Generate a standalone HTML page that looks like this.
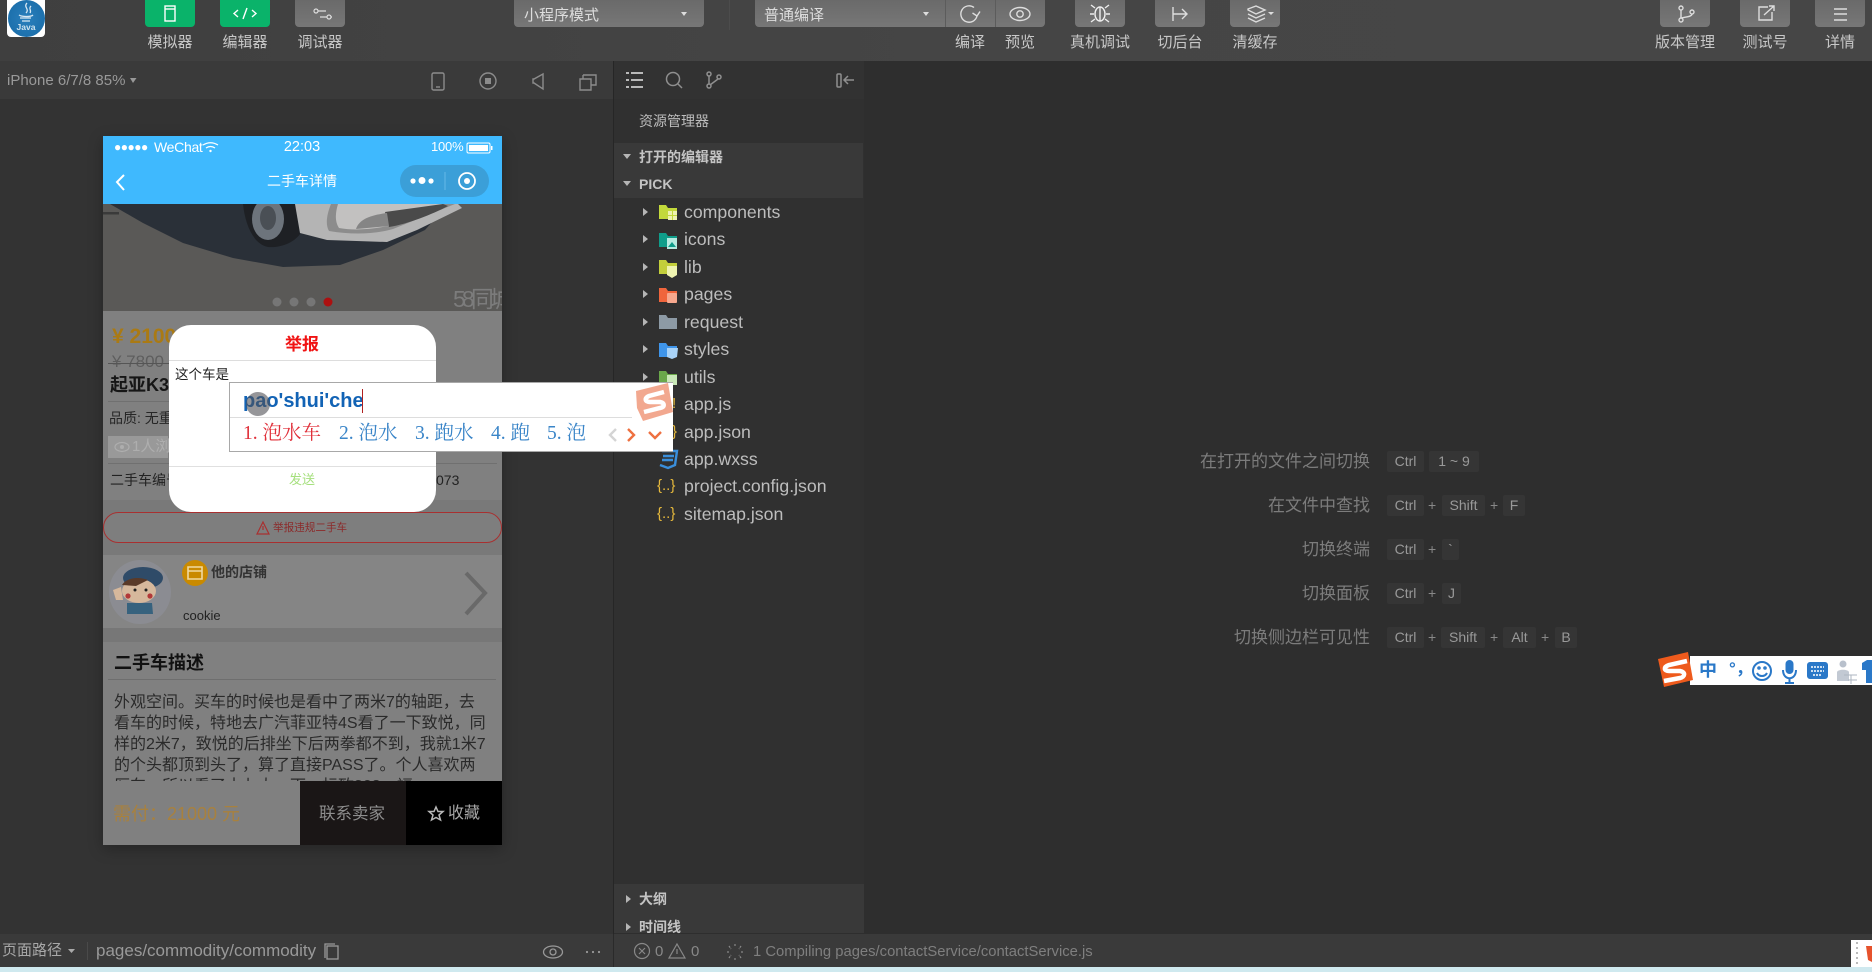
<!DOCTYPE html>
<html lang="zh-CN">
<head>
<meta charset="utf-8">
<title>微信开发者工具</title>
<style>
html,body{margin:0;padding:0;background:#2e2e2e}
#p{position:relative;width:1872px;height:972px;overflow:hidden;background:#2e2e2e;font-family:"Liberation Sans","Noto Sans CJK SC",sans-serif;color:#ccc}
#p div,#p span.a{position:absolute}
.t{position:absolute;white-space:nowrap;height:20px;line-height:20px}
.c{transform:translateX(-50%)}
.btn{top:0;width:50px;height:27px;border-radius:0 0 4px 4px;background:linear-gradient(#6a6a6a,#777)}
.g{background:#0ab36a}
.lb{font-size:15px;top:33px;color:#c8c8c8}
.tr{font-size:17.7px;left:684px;color:#bdbdbd}
.hd{font-size:14px;font-weight:700;left:639px;color:#c4c4c4}
.k{height:21px;line-height:21px;background:#353535;color:#999;font-size:14px;text-align:center;border-radius:2px}
.pl{font-size:14px;color:#888;height:21px;line-height:21px}
.sl{font-size:17px;color:#7c7c7c;text-align:right;width:240px;left:1130px}
.ds{font-size:16px;color:#2a2a2a}
.cd{font-family:"Liberation Serif","Noto Serif CJK SC",serif;font-size:19.500px;color:#3a85c8;top:424px}
svg{position:absolute;left:0;top:0}
</style>
</head>
<body>
<div id="p">
<!-- toolbar -->
<div style="left:0;top:0;width:1872px;height:61px;background:linear-gradient(90deg,#3f3f3f,#454545 50%,#464646)"></div>
<div style="left:0;top:61px;width:613px;height:38px;background:#3a3a3a"></div>
<div style="left:0;top:99px;width:613px;height:835px;background:#333"></div>
<div style="left:613px;top:61px;width:1px;height:873px;background:#262626"></div>
<div style="left:614px;top:61px;width:250px;height:872px;background:#303030"></div>
<div style="left:614px;top:61px;width:250px;height:38px;background:#323232"></div>
<div style="left:614px;top:143px;width:249px;height:55px;background:#393939"></div>
<div style="left:614px;top:884px;width:250px;height:49px;background:#393939"></div>
<div style="left:0;top:934px;width:1872px;height:33px;background:#3a3a3a"></div>
<div style="left:613px;top:934px;width:1px;height:33px;background:#2a2a2a"></div>
<div style="left:0;top:967px;width:1872px;height:5px;background:#cfe9ef"></div>

<!-- avatar -->
<div style="left:7px;top:0;width:38px;height:37px;background:#fff;border-radius:0 0 4px 4px;overflow:hidden">
  <div style="left:.5px;top:-.5px;width:37px;height:37px;border-radius:50%;background:radial-gradient(#2a7fbc,#176aa6)"></div>
</div>
<div class="t c" style="left:26px;top:17px;font-size:8.500px;font-weight:700;color:#cfe4f0">Java</div>

<div class="btn g" style="left:145px"></div>
<div class="btn g" style="left:220px"></div>
<div class="btn" style="left:295px"></div>
<div class="t lb c" style="left:170px">模拟器</div>
<div class="t lb c" style="left:245px">编辑器</div>
<div class="t lb c" style="left:320px">调试器</div>

<div class="btn" style="left:514px;width:190px"></div>
<div class="t" style="left:524px;top:6px;font-size:15px;color:#ddd">小程序模式</div>
<div style="left:729px;top:0;width:1px;height:30px;background:#4c4c4c"></div>
<div class="btn" style="left:755px;width:290px"></div>
<div style="left:945px;top:0;width:1px;height:27px;background:#5c5c5c"></div>
<div style="left:995px;top:0;width:1px;height:27px;background:#5c5c5c"></div>
<div class="t" style="left:764px;top:6px;font-size:15px;color:#ddd">普通编译</div>
<div class="btn" style="left:1075px"></div>
<div class="btn" style="left:1155px"></div>
<div class="btn" style="left:1230px"></div>
<div class="btn" style="left:1660px"></div>
<div class="btn" style="left:1740px"></div>
<div class="btn" style="left:1815px"></div>
<div class="t lb c" style="left:970px">编译</div>
<div class="t lb c" style="left:1020px">预览</div>
<div class="t lb c" style="left:1100px">真机调试</div>
<div class="t lb c" style="left:1180px">切后台</div>
<div class="t lb c" style="left:1255px">清缓存</div>
<div class="t lb c" style="left:1685px">版本管理</div>
<div class="t lb c" style="left:1765px">测试号</div>
<div class="t lb c" style="left:1840px">详情</div>

<div class="t" style="left:7px;top:71px;font-size:15px;color:#999">iPhone 6/7/8 85%</div>

<!-- phone -->
<div style="left:103px;top:136px;width:399px;height:709px;background:#808080;box-shadow:0 4px 14px rgba(0,0,0,.28);overflow:hidden">
  <div style="left:0;top:0;width:399px;height:68px;background:#3fb9fe"></div>
  <div class="t" style="left:11px;top:1px;font-size:12px;letter-spacing:-.5px;color:#fff">●●●●●</div>
  <div class="t" style="left:51px;top:1px;font-size:14px;letter-spacing:-.3px;color:#fff">WeChat</div>
  <div class="t c" style="left:199px;top:1px;font-size:14.500px;color:#fff">22:03</div>
  <div class="t" style="left:328px;top:1px;font-size:13px;letter-spacing:-.2px;color:#fff">100%</div>
  <div class="t c" style="left:199px;top:35px;font-size:14px;color:#fff">二手车详情</div>
  <div style="left:297px;top:29px;width:89px;height:32px;border-radius:16px;background:#3b9fd8"></div>
  <svg width="399" height="107" viewBox="0 0 399 107" style="left:0;top:68px">
    <rect width="399" height="107" fill="#5a5957"/>
    <path d="M0 8H16V10.500H0Z" fill="#3a3a3a"/>
    <path d="M7 0L40 19L80 39L130 54L180 63L237 61L280 46L322 26L345 0Z" fill="#2a3038"/>
    <path d="M140 0H192L197 30C190 40 175 44 165 43C150 40 142 20 140 0Z" fill="#1e2024"/>
    <ellipse cx="165" cy="15" rx="16" ry="21" fill="#6d747c"/>
    <ellipse cx="165" cy="14" rx="8" ry="12" fill="#4a4f55"/>
    <path d="M192 0L197 29L224 36L284 38L314 26L359 4L355 0Z" fill="#b4b4b4"/>
    <path d="M228 0C224 10 222 20 226 27C250 31 272 30 290 25L352 0Z" fill="#8c8c8c"/>
    <path d="M235 0C232 10 232 18 236 24C252 27 268 25 286 22L340 0Z" fill="#c2c1c0"/>
    <path d="M282 8L340 0L345 2C330 10 305 20 286 23Z" fill="#4a4a4a"/>
    <path d="M253 25C256 15 268 11 284 9L286 22Z" fill="#858585"/>
    <circle cx="174" cy="98" r="4.500" fill="#767676"/><circle cx="191" cy="98" r="4.500" fill="#767676"/><circle cx="208" cy="98" r="4.500" fill="#767676"/><circle cx="225" cy="98" r="4.500" fill="#ac1010"/>
    <text x="350" y="103" font-size="23" fill="#7c7c7c" font-family="Liberation Sans,Noto Sans CJK SC,sans-serif" textLength="60">58同城</text>
  </svg>

  <div class="t" style="left:9px;top:191px;font-size:21px;font-weight:700;color:#aa7a14">¥ 2100</div>
  <div class="t" style="left:9px;top:216px;font-size:17px;color:#5e5e5e">¥ 7800</div>
  <div style="left:5px;top:227px;width:62px;height:1px;background:#555"></div>
  <div class="t" style="left:7px;top:239px;font-size:18px;font-weight:700;color:#161616">起亚K3</div>
  <div style="left:5px;top:265px;width:389px;height:1px;background:#707070"></div>
  <div class="t" style="left:6px;top:272px;font-size:14px;color:#262626">品质: 无重</div>
  <div style="left:5px;top:300px;width:60px;height:22px;background:#999"></div>
  <div class="t" style="left:29px;top:301px;font-size:15px;color:#aeaeae">1人浏</div>
  <div style="left:5px;top:327px;width:389px;height:1px;background:#707070"></div>
  <div class="t" style="left:7px;top:334px;font-size:14px;color:#222">二手车编号</div>
  <div class="t" style="left:333px;top:334px;font-size:14px;color:#222">073</div>
  <div style="left:0;top:364px;width:399px;height:55px;background:#797979"></div>
  <div style="left:0;top:376px;width:397px;height:29px;border:1px solid #a83030;border-radius:16px;background:#7e7e7e"></div>
  <div class="t" style="left:170px;top:382px;font-size:10.600px;color:#8c2a2a">举报违规二手车</div>
  <div style="left:0;top:419px;width:399px;height:73px;background:#858585"></div>
  <div style="left:0;top:492px;width:399px;height:14px;background:#777"></div>
  <div class="t" style="left:108px;top:426px;font-size:14px;font-weight:700;color:#333">他的店铺</div>
  <div class="t" style="left:80px;top:470px;font-size:13px;color:#222">cookie</div>

  <div class="t" style="left:11px;top:517px;font-size:18px;font-weight:700;color:#111">二手车描述</div>
  <div style="left:5px;top:543px;width:388px;height:1px;background:#6e6e6e"></div>
  <div class="t ds" style="left:11px;top:557px">外观空间。买车的时候也是看中了两米7的轴距&#65292;去</div>
  <div class="t ds" style="left:11px;top:578px">看车的时候&#65292;特地去广汽菲亚特4S看了一下致悦&#65292;同</div>
  <div class="t ds" style="left:11px;top:599px">样的2米7&#65292;致悦的后排坐下后两拳都不到&#65292;我就1米7</div>
  <div class="t ds" style="left:11px;top:620px">的个头都顶到头了&#65292;算了直接PASS了。个人喜欢两</div>
  <div class="t ds" style="left:11px;top:641px">厢车&#65292;所以看了十七大一下&#65292;标致308&#65292;福</div>
  <div style="left:0;top:645px;width:399px;height:64px;background:#808080"></div>
  <div class="t" style="left:10px;top:668px;font-size:18px;color:#a8813e">需付&#65306;21000 元</div>
  <div style="left:197px;top:645px;width:106px;height:64px;background:#1a1616"></div>
  <div style="left:303px;top:645px;width:96px;height:64px;background:#000"></div>
  <div class="t c" style="left:249px;top:668px;font-size:16.500px;color:#8e8e8e">联系卖家</div>
  <div class="t" style="left:345px;top:668px;font-size:16px;color:#a8a8a8">收藏</div>
</div>

<!-- modal -->
<div style="left:169px;top:325px;width:267px;height:187px;background:#fff;border-radius:22px"></div>
<div class="t c" style="left:302px;top:335px;font-size:17px;font-weight:700;color:#f01414">举报</div>
<div style="left:169px;top:360px;width:267px;height:1px;background:#ddd"></div>
<div class="t" style="left:175px;top:365px;font-size:13.500px;color:#222">这个车是</div>
<div style="left:169px;top:466px;width:267px;height:1px;background:#e0e0e0"></div>
<div class="t c" style="left:302px;top:470px;font-size:13px;color:#a6e07e">发送</div>

<!-- file panel -->
<div class="t" style="left:639px;top:111px;font-size:14px;color:#bdbdbd">资源管理器</div>
<div class="t hd" style="top:147px">打开的编辑器</div>
<div class="t hd" style="top:174px">PICK</div>
<div class="t tr" style="top:202px">components</div>
<div class="t tr" style="top:229px">icons</div>
<div class="t tr" style="top:257px">lib</div>
<div class="t tr" style="top:284px">pages</div>
<div class="t tr" style="top:312px">request</div>
<div class="t tr" style="top:339px">styles</div>
<div class="t tr" style="top:367px">utils</div>
<div class="t tr" style="top:394px">app.js</div>
<div class="t tr" style="top:422px">app.json</div>
<div class="t tr" style="top:449px">app.wxss</div>
<div class="t tr" style="top:476px">project.config.json</div>
<div class="t tr" style="top:504px">sitemap.json</div>
<div class="t" style="left:657px;top:476px;font-size:15px;color:#e6b93c">{..}</div>
<div class="t" style="left:657px;top:504px;font-size:15px;color:#e6b93c">{..}</div>
<div class="t" style="left:672px;top:394px;font-size:15px;color:#e6b93c">!</div>
<div class="t" style="left:672px;top:422px;font-size:15px;color:#e6b93c">}</div>
<div class="t hd" style="top:889px">大纲</div>
<div class="t hd" style="top:917px">时间线</div>

<!-- shortcuts -->
<div class="t sl" style="top:452px">在打开的文件之间切换</div>
<div class="t sl" style="top:496px">在文件中查找</div>
<div class="t sl" style="top:540px">切换终端</div>
<div class="t sl" style="top:584px">切换面板</div>
<div class="t sl" style="top:628px">切换侧边栏可见性</div>

<div class="k" style="left:1387px;top:451px;width:37px">Ctrl</div><div class="k" style="left:1429px;top:451px;width:50px">1 ~ 9</div>

<div class="k" style="left:1387px;top:495px;width:37px">Ctrl</div><div class="t pl" style="left:1428px;top:495px">+</div><div class="k" style="left:1442px;top:495px;width:43px">Shift</div><div class="t pl" style="left:1490px;top:495px">+</div><div class="k" style="left:1503px;top:495px;width:22px">F</div>

<div class="k" style="left:1387px;top:539px;width:37px">Ctrl</div><div class="t pl" style="left:1428px;top:539px">+</div><div class="k" style="left:1442px;top:539px;width:17px">`</div>

<div class="k" style="left:1387px;top:583px;width:37px">Ctrl</div><div class="t pl" style="left:1428px;top:583px">+</div><div class="k" style="left:1442px;top:583px;width:19px">J</div>

<div class="k" style="left:1387px;top:627px;width:37px">Ctrl</div><div class="t pl" style="left:1428px;top:627px">+</div><div class="k" style="left:1441px;top:627px;width:44px">Shift</div><div class="t pl" style="left:1490px;top:627px">+</div><div class="k" style="left:1503px;top:627px;width:33px">Alt</div><div class="t pl" style="left:1541px;top:627px">+</div><div class="k" style="left:1555px;top:627px;width:22px">B</div>

<!-- status bar -->
<div class="t" style="left:2px;top:941px;font-size:15px;color:#a8a8a8">页面路径</div>
<div style="left:87px;top:942px;width:1px;height:18px;background:#4a4a4a"></div>
<div class="t" style="left:96px;top:941px;font-size:17px;color:#999">pages/commodity/commodity</div>
<div class="t" style="left:655px;top:942px;font-size:15px;color:#888">0</div>
<div class="t" style="left:691px;top:942px;font-size:15px;color:#888">0</div>
<div class="t" style="left:753px;top:942px;font-size:14.800px;color:#7f7f7f">1 Compiling pages/contactService/contactService.js</div>

<!-- icons -->
<svg width="1872" height="972" viewBox="0 0 1872 972" fill="none">
  <!-- java logo -->
  <path d="M27 3C23 7 30 9 26 13M31 6C28 9 32 10 30 13M19 15C22 17 31 17 33 15M20 18H31M22 21H30" stroke="#d8e8f3" stroke-width="1.300"/>
  <g stroke="#e8e8e8" stroke-width="1.4">
    <rect x="165" y="6" width="10" height="15" fill="none" stroke="#fff"/><path d="M165 9H175" stroke="#fff"/>
    <path d="M238 10L234 13.5L238 17M252 10L256 13.5L252 17M247 8L243 19" stroke="#fff"/>
    <g stroke="#ddd" stroke-width="1.2"><path d="M314 11H326M320 17H332"/><circle cx="316" cy="11" r="2" fill="#707070"/><circle cx="329" cy="17" r="2" fill="#707070"/></g>
    <path d="M974 7.500A8.200 8.200 0 1 0 977 16" stroke="#ddd"/><path d="M972.500 13L977 16L980 11.500" stroke="#ddd"/>
    <ellipse cx="1020" cy="14" rx="10" ry="6.5" stroke="#ddd"/><circle cx="1020" cy="14" r="3.2" stroke="#ddd"/>
    <g stroke="#eee"><ellipse cx="1100" cy="14" rx="5" ry="7"/><path d="M1095 8L1091 5M1105 8L1109 5M1094 14H1090M1106 14H1110M1095 19L1091 22M1105 19L1109 22M1100 7V21"/></g>
    <path d="M1173 7V21M1173 14H1187M1182 9L1187 14L1182 19" stroke="#ddd"/>
    <g stroke="#ddd"><path d="M1248 9L1256 6L1265 10L1256 14L1248 10ZM1248 14L1256 18L1265 14M1248 18L1256 22L1265 18"/></g>
    <path d="M1268 12H1274L1271 15Z" fill="#ddd" stroke="none"/>
    <g stroke="#ddd"><circle cx="1681" cy="8" r="2"/><circle cx="1681" cy="20" r="2"/><circle cx="1692" cy="12" r="2"/><path d="M1681 10V18M1692 14C1692 17 1684 17 1682 18"/></g>
    <path d="M1768 7H1759V20H1772V12M1764 15L1774 6M1769 6H1774V11" stroke="#ddd"/>
    <path d="M1834 9H1847M1834 14H1847M1834 20H1847" stroke="#ddd"/>
  </g>
  <path d="M681 12H687L684 16Z" fill="#ddd"/><path d="M923 12H929L926 16Z" fill="#ddd"/>
  <path d="M130 78H136.500L133 83Z" fill="#999"/>
  <g stroke="#8c8c8c" stroke-width="1.4">
    <rect x="432" y="73" width="12" height="17" rx="1.5"/><path d="M436 87H440"/>
    <circle cx="488" cy="81" r="8"/><rect x="485" y="78" width="6" height="6" fill="#8c8c8c" stroke="none"/>
    <path d="M543 74L534 79H533V83H534L543 89Z"/>
    <path d="M583 75H596V85H591M583 75V79M580 79H591V90H580Z"/>
  </g>
  <g stroke="#e6e6e6" stroke-width="1.6"><path d="M631 73H643M631 80H643M631 87H643M626 73H629M626 80H629M626 87H629"/></g>
  <g stroke="#8f8f8f" stroke-width="1.5">
    <circle cx="673" cy="79" r="6.5"/><path d="M678 84L682 88"/>
    <circle cx="709" cy="74" r="2"/><circle cx="709" cy="86" r="2"/><circle cx="719" cy="77" r="2"/><path d="M709 76V84M718 79L710 85"/>
    <rect x="837" y="74" width="4" height="13" rx="1"/><path d="M854 80H844M848 76L844 80L848 84"/>
  </g>
  <g fill="#b5b5b5">
    <path d="M623 154H631L627 159ZM623 181H631L627 186Z"/>
    <path d="M643 208L648 212L643 216ZM643 235L648 239L643 243ZM643 263L648 267L643 271ZM643 290L648 294L643 298ZM643 318L648 322L643 326ZM643 345L648 349L643 353ZM643 373L648 377L643 381Z"/>
    <path d="M626 895L631 899L626 903ZM626 923L631 927L626 931Z"/>
  </g>
  <!-- folders -->
  <path d="M659 205H666L668 208H677V219H659Z" fill="#c3d93b"/><rect x="668" y="211" width="9" height="9" fill="#eef3b0"/><path d="M672.500 211V220M668 215.500H677" stroke="#c3d93b"/>
  <path d="M659 233H666L668 236H677V247H659Z" fill="#0f9d8a"/><rect x="667" y="238" width="10" height="11" fill="#b5ebe1"/><path d="M668 247L672 242L676 247Z" fill="#0f9d8a"/>
  <path d="M659 260H666L668 263H677V274H659Z" fill="#c3cf3b"/><path d="M667 266H677V275L672 278L667 275Z" fill="#eef3b0"/>
  <path d="M659 288H666L668 291H677V302H659Z" fill="#f0653c"/><rect x="667" y="293" width="10" height="10" rx="1" fill="#f7a88e"/>
  <path d="M659 315H666L668 318H677V329H659Z" fill="#8d9aa5"/>
  <path d="M659 343H666L668 346H677V357H659Z" fill="#3f95ea"/><path d="M667 348H678L677 357L672 359L667 357Z" fill="#a9d3f7"/>
  <path d="M659 371H666L668 374H677V385H659Z" fill="#6aa84a"/><rect x="667" y="375" width="10" height="10" fill="#c9e8b8"/>
  <path d="M662 451H677L675 465L668 468L660 465M663 456H674M662 460H673" fill="none" stroke="#3a8fdc" stroke-width="2.400"/>
  <!-- status icons -->
  <path d="M68 949H75L71.500 953Z" fill="#aaa"/>
  <g stroke="#999" stroke-width="1.3">
    <rect x="327" y="946" width="11" height="13"/><path d="M325 958V944H335"/>
    <ellipse cx="553" cy="952" rx="9.5" ry="6"/><circle cx="553" cy="952" r="3"/>
  </g>
  <g fill="#999"><circle cx="587" cy="952" r="1.1"/><circle cx="593" cy="952" r="1.1"/><circle cx="599" cy="952" r="1.1"/></g>
  <g stroke="#888" stroke-width="1.2">
    <circle cx="642" cy="951" r="7.5"/><path d="M639 948L645 954M645 948L639 954"/>
    <path d="M677 944L685 958H669ZM677 949V954"/>
    <path d="M735 944V947M741 946L739 949M743 952H740M741 958L739 955M735 960V957M729 958L731 955M727 952H730M729 946L731 949" stroke-dasharray="2 1"/>
  </g>
  <!-- phone icons -->
  <g fill="none">
    <path d="M124 175L117 182L124 190" stroke="#fff" stroke-width="2"/>
    <path d="M203 145C208 142 213 142 218 145M206 148C209 146 212 146 215 148" stroke="#fff" stroke-width="1.300"/>
    <circle cx="210.500" cy="151" r="1.200" fill="#fff"/>
    <rect x="467" y="143" width="23" height="10" rx="1.5" stroke="#fff" stroke-width="1"/><rect x="469" y="145" width="19" height="6" fill="#fff"/><rect x="491" y="146" width="1.500" height="4" fill="#fff"/>
    <circle cx="413" cy="181" r="2.600" fill="#fff"/><circle cx="422" cy="180.500" r="3.500" fill="#fff"/><circle cx="431" cy="181" r="2.600" fill="#fff"/>
    <path d="M445 172V190" stroke="#65b8e8"/>
    <circle cx="467" cy="181" r="8" stroke="#fff" stroke-width="1.8"/><circle cx="467" cy="181" r="3" fill="#fff"/>
    <!-- report + eye -->
    <path d="M263 522L269 534H257ZM263 526V530" stroke="#a83030" stroke-width="1.200"/>
    <ellipse cx="122" cy="447" rx="7" ry="4.500" stroke="#aeaeae" stroke-width="1.200"/><circle cx="122" cy="447" r="2" fill="#aeaeae"/>
    <!-- shop avatar -->
    <ellipse cx="140" cy="592" rx="31" ry="32" fill="#8b8c92"/>
    <ellipse cx="143" cy="578" rx="20" ry="11" fill="#2f4b68"/>
    <ellipse cx="139" cy="591" rx="17" ry="12" fill="#d6b89c"/>
    <path d="M122 585C126 578 138 576 148 580L136 586Z" fill="#5a3a28"/>
    <circle cx="128" cy="596" r="2.600" fill="#b13838"/><circle cx="150" cy="596" r="2.600" fill="#b13838"/>
    <circle cx="135" cy="590" r="1.500" fill="#222"/><circle cx="146" cy="590" r="1.500" fill="#222"/>
    <path d="M127 603H152L153 614H127Z" fill="#37627e"/>
    <path d="M113 590L121 587L123 600L116 600Z" fill="#d6b89c"/>
    <circle cx="195" cy="573" r="13" fill="#c98a00"/>
    <path d="M188 567H202V579H188ZM188 571H202" stroke="#f0d9a0" stroke-width="1.6"/>
    <path d="M466 573L485 593L466 614" stroke="#696969" stroke-width="4"/>
    <path d="M436 807L438 811.500H443L439 815L440.500 820L436 817.500L431.500 820L433 815L429 811.500H434Z" stroke="#b8b8b8" stroke-width="1.500"/>
  </g>
</svg>

<!-- IME -->
<div style="left:229px;top:382px;width:443px;height:68px;background:#fff;border:1px solid #a8a8a8;border-right:0;box-sizing:content-box"></div>
<div class="t" style="left:243px;top:391px;font-size:20px;font-weight:700;color:#1263b5">pao'shui'che</div>
<div style="left:362px;top:389px;width:1px;height:24px;background:#b02020"></div>
<div style="left:246px;top:392px;width:24px;height:24px;border-radius:50%;background:rgba(80,80,85,.6)"></div>
<div style="left:230px;top:417px;width:402px;height:1px;background:#ddd"></div>
<div class="t cd" style="left:243px;color:#e0303a">1. 泡水车</div>
<div class="t cd" style="left:339px">2. 泡水</div>
<div class="t cd" style="left:415px">3. 跑水</div>
<div class="t cd" style="left:491px">4. 跑</div>
<div class="t cd" style="left:547px">5. 泡</div>
<svg width="1872" height="972" viewBox="0 0 1872 972" fill="none">
  <path d="M616 429L610 435L616 441" stroke="#d4d4d4" stroke-width="2.400"/>
  <path d="M628 429L634 435L628 441" stroke="#ee7040" stroke-width="2.400"/>
  <path d="M649 432L655 438L661 432" stroke="#ee7040" stroke-width="2.400"/>
  <path d="M636 391L668 383L673 412L643 421L637 408Z" fill="#f2a88f"/>
  <path d="M664 392L649 396C644 398 645 402 650 402L660 402C665 403 665 407 660 408L644 412" stroke="#fff" stroke-width="4.500"/>
  <!-- Sogou bar -->
  <rect x="1690" y="656" width="182" height="29" fill="#fff"/>
  <path d="M1658 659L1688 652L1693 680L1664 687Z" fill="#ee5a1c"/>
  <path d="M1687 661L1669 665C1663 667 1664 671 1669 671L1680 671C1686 672 1685 677 1680 678L1664 681" stroke="#fff" stroke-width="4.500"/>
  <g stroke="#2a78c8" stroke-width="2">
    <circle cx="1762" cy="671" r="9"/><circle cx="1759" cy="668" r=".8"/><circle cx="1765" cy="668" r=".8"/><path d="M1757 673C1759 677 1765 677 1767 673"/>
    <rect x="1786.500" y="661" width="6" height="12" rx="3" fill="#2a78c8"/><path d="M1783 670C1783 681 1796 681 1796 670M1789.500 678V683M1785 683H1794"/>
    <rect x="1808" y="663" width="19" height="15" rx="2" fill="#2a78c8"/>
    <path d="M1811 667H1824M1811 671H1824M1813 675H1822" stroke="#fff" stroke-width="1.400" stroke-dasharray="2 1"/>
    <path d="M1862 663L1867 660L1872 660V683H1866V670H1862Z" fill="#2a78c8" stroke="none"/>
  </g>
  <circle cx="1843" cy="664" r="3.500" fill="#b8c0cc"/><path d="M1837 681V672C1838 669 1848 669 1849 672V681Z" fill="#c2c9d3"/>
  <path d="M1844 675H1857M1848 680H1857M1851 675V684" stroke="#aeb6c0"/>
  <!-- tray -->
  <rect x="1851" y="940" width="21" height="27" fill="#fff"/>
  <path d="M1857 942V966" stroke="#bbb" stroke-width="2" stroke-dasharray="2 3"/>
  <path d="M1866 946H1872V962L1868 960Z" fill="#e6522c"/>
</svg>
<div class="t c" style="left:1708px;top:660px;font-size:18px;font-weight:700;color:#2a78c8">中</div>
<div class="t" style="left:1729px;top:659px;font-size:17px;font-weight:700;color:#2a78c8">°&#65292;</div>
</div>
</body>
</html>
